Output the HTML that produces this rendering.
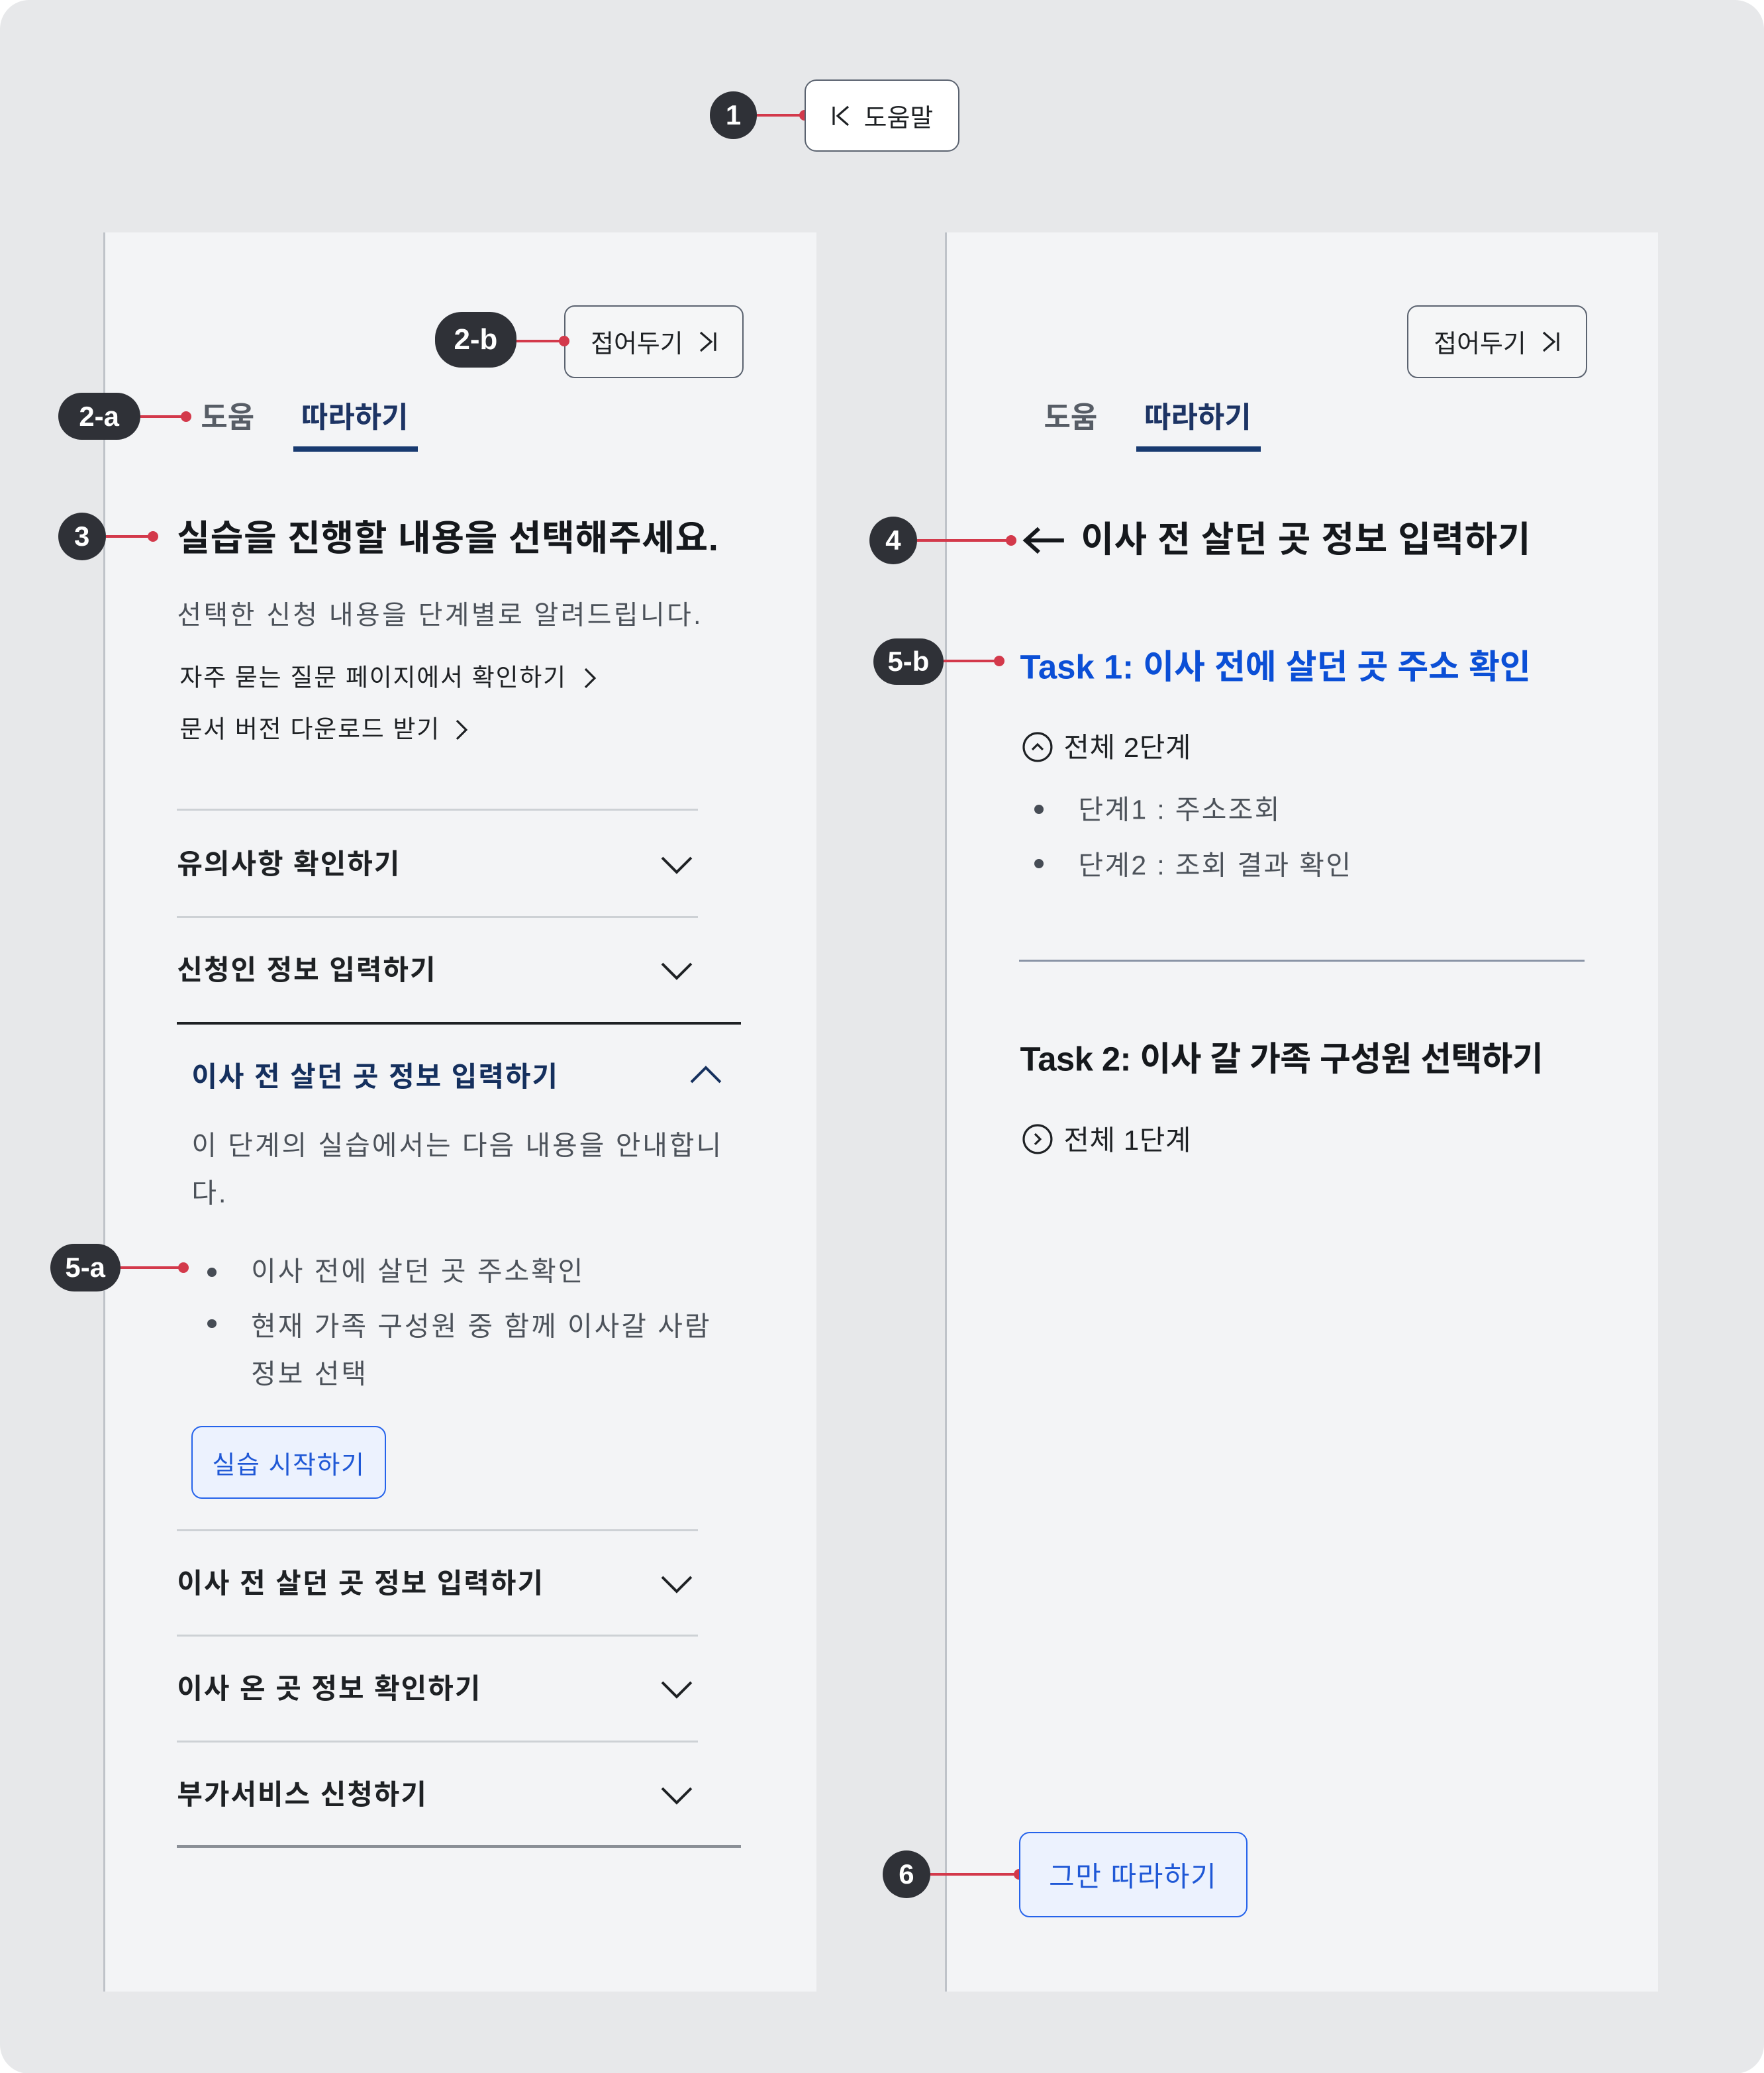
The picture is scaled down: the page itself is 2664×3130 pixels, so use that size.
<!DOCTYPE html>
<html><head><meta charset="utf-8"><style>
*{margin:0;padding:0;box-sizing:border-box}
html,body{width:2664px;height:3130px;overflow:hidden;background:#fff}
#w{zoom:1.9955;position:relative;width:1335px;height:1569px;background:#e7e8ea;border-radius:22px;font-family:"Liberation Sans","Noto Sans CJK KR",sans-serif;color:#1e2124}
.a{position:absolute;white-space:nowrap}
.panel{position:absolute;top:176px;width:540px;height:1331px;background:#f3f4f6;border-left:2px solid #bfc3c9}
.badge{position:absolute;background:#2f3137;color:#fff;font-weight:700;font-size:21px;border-radius:20px;display:flex;align-items:center;justify-content:center}
.line{position:absolute;height:2px;background:#d3394b}
.dot{position:absolute;width:8px;height:8px;border-radius:50%;background:#d3394b}
.btn{position:absolute;border:1.5px solid #5b6370;border-radius:8px;background:#fff;display:flex;align-items:center;justify-content:center;font-size:19px;color:#1e2124}
.t{position:absolute;white-space:nowrap;transform:translateY(-50%);line-height:1}
.hr{position:absolute;height:1.5px;background:#cdd1d5}
.dk{background:#1e2124;height:2px}
.b{font-weight:700}
.chev{position:absolute;width:26px;height:16px}
.bul{position:absolute;width:7px;height:7px;border-radius:50%;background:#464c55}
.ls1{letter-spacing:1px}
.ls15{letter-spacing:1.5px}
</style></head><body><div id="w">

<!-- 1 -->
<div class="badge" style="left:537px;top:69px;width:36px;height:36px">1</div>
<div class="line" style="left:573px;top:86px;width:36px"></div>
<div class="dot" style="left:605px;top:83px"></div>
<div class="btn" style="left:609px;top:60px;width:117px;height:55px;border-radius:9px"><svg width="16" height="18" viewBox="0 0 16 18" style="margin-right:9px"><path d="M2 2v14M13 2L5 9l8 7" fill="none" stroke="#1e2124" stroke-width="1.6"/></svg>도움말</div>

<!-- panel 1 -->
<div class="panel" style="left:78px"></div>
<div class="btn" style="left:427px;top:231px;width:136px;height:55px;background:#f5f6f7">접어두기<svg width="16" height="18" viewBox="0 0 16 18" style="margin-left:10px"><path d="M3 2l8 7-8 7M14 2v14" fill="none" stroke="#1e2124" stroke-width="1.6"/></svg></div>
<div class="badge" style="left:329px;top:236px;width:62px;height:42px;font-size:22px">2-b</div>
<div class="line" style="left:391px;top:257px;width:36px"></div>
<div class="dot" style="left:423px;top:254px"></div>

<div class="badge" style="left:44px;top:297px;width:62px;height:36px;font-size:21px">2-a</div>
<div class="line" style="left:106px;top:314px;width:35px"></div>
<div class="dot" style="left:137px;top:311px"></div>
<div class="t b" style="left:152px;top:316px;font-size:22px;color:#575d66">도움</div>
<div class="t b" style="left:228px;top:316px;font-size:22px;color:#1d3464">따라하기</div>
<div class="a" style="left:222px;top:338px;width:94px;height:4px;background:#183a70"></div>

<div class="badge" style="left:44px;top:388px;width:36px;height:36px">3</div>
<div class="line" style="left:80px;top:405px;width:36px"></div>
<div class="dot" style="left:112px;top:402px"></div>
<div class="t b" style="left:134px;top:408px;font-size:27px;color:#15181c;letter-spacing:0.4px">실습을 진행할 내용을 선택해주세요.</div>
<div class="t" style="left:134px;top:466px;font-size:20px;color:#4c525a;letter-spacing:1.7px">선택한 신청 내용을 단계별로 알려드립니다.</div>
<div class="t" style="left:136px;top:513px;font-size:18.5px;color:#1e2124;letter-spacing:0.9px">자주 묻는 질문 페이지에서 확인하기</div>
<svg class="a" style="left:440px;top:504px;width:12px;height:18px" viewBox="0 0 12 18"><path d="M3 2l7 7-7 7" fill="none" stroke="#1e2124" stroke-width="1.6"/></svg>
<div class="t" style="left:136px;top:552px;font-size:18.5px;color:#1e2124;letter-spacing:0.9px">문서 버전 다운로드 받기</div>
<svg class="a" style="left:343px;top:543px;width:12px;height:18px" viewBox="0 0 12 18"><path d="M3 2l7 7-7 7" fill="none" stroke="#1e2124" stroke-width="1.6"/></svg>

<div class="hr" style="left:134px;top:612px;width:394px"></div>
<div class="t b ls1" style="left:134px;top:654px;font-size:21px">유의사항 확인하기</div>
<svg class="chev" style="left:499px;top:646px" viewBox="0 0 26 16"><path d="M2 3l11 11L24 3" fill="none" stroke="#1e2124" stroke-width="2"/></svg>
<div class="hr" style="left:134px;top:693px;width:394px"></div>
<div class="t b ls1" style="left:134px;top:734px;font-size:21px">신청인 정보 입력하기</div>
<svg class="chev" style="left:499px;top:726px" viewBox="0 0 26 16"><path d="M2 3l11 11L24 3" fill="none" stroke="#1e2124" stroke-width="2"/></svg>
<div class="hr dk" style="left:134px;top:773px;width:427px"></div>
<div class="t b ls1" style="left:145px;top:815px;font-size:21px;color:#15305e">이사 전 살던 곳 정보 입력하기</div>
<svg class="chev" style="left:521px;top:805px" viewBox="0 0 26 16"><path d="M2 14L13 3l11 11" fill="none" stroke="#15305e" stroke-width="2"/></svg>
<div class="t ls15" style="left:145px;top:867px;font-size:20.5px;color:#4c525a">이 단계의 실습에서는 다음 내용을 안내합니</div>
<div class="t ls15" style="left:145px;top:903px;font-size:20.5px;color:#4c525a">다.</div>

<div class="badge" style="left:38px;top:941px;width:53px;height:36px;font-size:21px">5-a</div>
<div class="line" style="left:91px;top:958px;width:48px"></div>
<div class="dot" style="left:135px;top:955px"></div>
<div class="bul" style="left:157px;top:959px"></div>
<div class="t ls15" style="left:190px;top:962px;font-size:20.5px;color:#4c525a">이사 전에 살던 곳 주소확인</div>
<div class="bul" style="left:157px;top:998px"></div>
<div class="t ls15" style="left:190px;top:1004px;font-size:20.5px;color:#4c525a">현재 가족 구성원 중 함께 이사갈 사람</div>
<div class="t ls15" style="left:190px;top:1040px;font-size:20.5px;color:#4c525a">정보 선택</div>
<div class="btn" style="left:145px;top:1079px;width:147px;height:55px;border-color:#2563eb;background:#ecf2fe;color:#1f58d6;letter-spacing:0.8px">실습 시작하기</div>

<div class="hr" style="left:134px;top:1157px;width:394px"></div>
<div class="t b ls1" style="left:134px;top:1198px;font-size:21px">이사 전 살던 곳 정보 입력하기</div>
<svg class="chev" style="left:499px;top:1190px" viewBox="0 0 26 16"><path d="M2 3l11 11L24 3" fill="none" stroke="#1e2124" stroke-width="2"/></svg>
<div class="hr" style="left:134px;top:1237px;width:394px"></div>
<div class="t b ls1" style="left:134px;top:1278px;font-size:21px">이사 온 곳 정보 확인하기</div>
<svg class="chev" style="left:499px;top:1270px" viewBox="0 0 26 16"><path d="M2 3l11 11L24 3" fill="none" stroke="#1e2124" stroke-width="2"/></svg>
<div class="hr" style="left:134px;top:1317px;width:394px"></div>
<div class="t b ls1" style="left:134px;top:1358px;font-size:21px">부가서비스 신청하기</div>
<svg class="chev" style="left:499px;top:1350px" viewBox="0 0 26 16"><path d="M2 3l11 11L24 3" fill="none" stroke="#1e2124" stroke-width="2"/></svg>
<div class="hr" style="left:134px;top:1396px;width:427px;background:#8a8f96;height:2px"></div>

<!-- panel 2 -->
<div class="panel" style="left:715px"></div>
<div class="btn" style="left:1065px;top:231px;width:136px;height:55px;background:#f5f6f7">접어두기<svg width="16" height="18" viewBox="0 0 16 18" style="margin-left:10px"><path d="M3 2l8 7-8 7M14 2v14" fill="none" stroke="#1e2124" stroke-width="1.6"/></svg></div>
<div class="t b" style="left:790px;top:316px;font-size:22px;color:#575d66">도움</div>
<div class="t b" style="left:866px;top:316px;font-size:22px;color:#1d3464">따라하기</div>
<div class="a" style="left:860px;top:338px;width:94px;height:4px;background:#183a70"></div>

<div class="badge" style="left:658px;top:391px;width:36px;height:36px">4</div>
<div class="line" style="left:694px;top:408px;width:71px"></div>
<div class="dot" style="left:761px;top:405px"></div>
<svg class="a" style="left:773px;top:398px;width:34px;height:22px" viewBox="0 0 34 22"><path d="M32 11H4M13 2L3 11l10 9" fill="none" stroke="#15181c" stroke-width="3"/></svg>
<div class="t b" style="left:818px;top:409px;font-size:27px;color:#15181c;letter-spacing:0.3px">이사 전 살던 곳 정보 입력하기</div>

<div class="badge" style="left:661px;top:483px;width:53px;height:35px;font-size:21px">5-b</div>
<div class="line" style="left:714px;top:499px;width:42px"></div>
<div class="dot" style="left:752px;top:496px"></div>
<div class="t b" style="left:772px;top:505px;font-size:25.5px;color:#0b4fd6">Task 1: 이사 전에 살던 곳 주소 확인</div>
<svg class="a" style="left:773px;top:553px;width:24px;height:24px" viewBox="0 0 24 24"><circle cx="12" cy="12" r="10.5" fill="none" stroke="#1e2124" stroke-width="1.6"/><path d="M8 14l4-4 4 4" fill="none" stroke="#1e2124" stroke-width="1.6"/></svg>
<div class="t" style="left:805px;top:566px;font-size:21px;letter-spacing:0.3px">전체 2단계</div>
<div class="bul" style="left:783px;top:609px"></div>
<div class="t" style="left:816px;top:613px;font-size:20.5px;color:#4c525a;letter-spacing:1.2px">단계1 : 주소조회</div>
<div class="bul" style="left:783px;top:650px"></div>
<div class="t" style="left:816px;top:655px;font-size:20.5px;color:#4c525a;letter-spacing:1.2px">단계2 : 조회 결과 확인</div>
<div class="hr" style="left:771px;top:726px;width:428px;background:#8a94a6"></div>
<div class="t b" style="left:772px;top:802px;font-size:25.5px;color:#15181c;letter-spacing:-0.3px">Task 2: 이사 갈 가족 구성원 선택하기</div>
<svg class="a" style="left:773px;top:850px;width:24px;height:24px" viewBox="0 0 24 24"><circle cx="12" cy="12" r="10.5" fill="none" stroke="#1e2124" stroke-width="1.6"/><path d="M10 8l4 4-4 4" fill="none" stroke="#1e2124" stroke-width="1.6"/></svg>
<div class="t" style="left:805px;top:863px;font-size:21px;letter-spacing:0.3px">전체 1단계</div>

<div class="badge" style="left:668px;top:1400px;width:36px;height:36px">6</div>
<div class="line" style="left:704px;top:1417px;width:67px"></div>
<div class="dot" style="left:767px;top:1414px"></div>
<div class="btn" style="left:771px;top:1386px;width:173px;height:65px;border-color:#2563eb;background:#ecf2fe;color:#1f58d6;font-size:21px;letter-spacing:0.8px">그만 따라하기</div>

</div></body></html>
